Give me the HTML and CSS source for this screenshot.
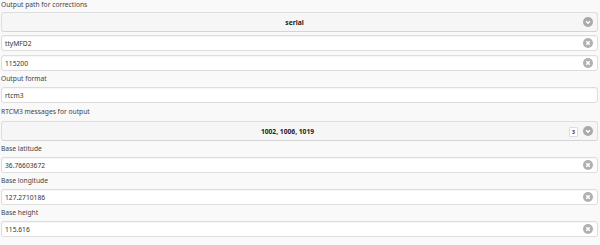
FILE: index.html
```html
<!DOCTYPE html>
<html>
<head>
<meta charset="utf-8">
<link rel="stylesheet" href="styles.css">
</head>
<body>
<form class="form">
  <div class="label first">Output path for corrections</div>
  <div class="select">
    <span class="select-text">serial</span>
    <span class="icon arrow"><svg viewBox="0 0 10 10" width="10" height="10"><circle cx="5" cy="5" r="5" fill="#a9a9a9"/><path d="M3 4.2 L5 6.2 L7 4.2" fill="none" stroke="#fff" stroke-width="1.5"/></svg></span>
  </div>
  <div class="input gap3"><span class="value">ttyMFD2</span><span class="icon clear"><svg viewBox="0 0 10 10" width="10" height="10"><circle cx="5" cy="5" r="5" fill="#b0b0b0"/><path d="M3.3 3.3 L6.7 6.7 M6.7 3.3 L3.3 6.7" stroke="#fff" stroke-width="1.5"/></svg></span></div>
  <div class="input gap4"><span class="value">115200</span><span class="icon clear"><svg viewBox="0 0 10 10" width="10" height="10"><circle cx="5" cy="5" r="5" fill="#b0b0b0"/><path d="M3.3 3.3 L6.7 6.7 M6.7 3.3 L3.3 6.7" stroke="#fff" stroke-width="1.5"/></svg></span></div>
  <div class="label">Output format</div>
  <div class="input"><span class="value">rtcm3</span></div>
  <div class="label tall">RTCM3 messages for output</div>
  <div class="select with-count">
    <span class="select-text">1002, 1006, 1019</span>
    <span class="count">3</span>
    <span class="icon arrow"><svg viewBox="0 0 10 10" width="10" height="10"><circle cx="5" cy="5" r="5" fill="#a9a9a9"/><path d="M3 4.2 L5 6.2 L7 4.2" fill="none" stroke="#fff" stroke-width="1.5"/></svg></span>
  </div>
  <div class="label">Base latitude</div>
  <div class="input"><span class="value">36.76603672</span><span class="icon clear"><svg viewBox="0 0 10 10" width="10" height="10"><circle cx="5" cy="5" r="5" fill="#b0b0b0"/><path d="M3.3 3.3 L6.7 6.7 M6.7 3.3 L3.3 6.7" stroke="#fff" stroke-width="1.5"/></svg></span></div>
  <div class="label">Base longitude</div>
  <div class="input"><span class="value">127.2710186</span><span class="icon clear"><svg viewBox="0 0 10 10" width="10" height="10"><circle cx="5" cy="5" r="5" fill="#b0b0b0"/><path d="M3.3 3.3 L6.7 6.7 M6.7 3.3 L3.3 6.7" stroke="#fff" stroke-width="1.5"/></svg></span></div>
  <div class="label">Base height</div>
  <div class="input"><span class="value">115.616</span><span class="icon clear"><svg viewBox="0 0 10 10" width="10" height="10"><circle cx="5" cy="5" r="5" fill="#b0b0b0"/><path d="M3.3 3.3 L6.7 6.7 M6.7 3.3 L3.3 6.7" stroke="#fff" stroke-width="1.5"/></svg></span></div>
</form>
</body>
</html>
```
FILE: styles.css
```css
html, body {
  margin: 0;
  padding: 0;
  background: #f9f9f9;
}
body {
  font-family: "Noto Sans", "Open Sans", sans-serif;
  font-size: 6.7px;
  color: #444;
}
.form {
  display: flex;
  flex-direction: column;
  width: 597px;
  padding-left: 1px;
}
.label {
  height: 10px;
  line-height: 10px;
  margin: 3px 0;
  color: #444;
}
.label.first {
  margin-top: 0;
  margin-bottom: 2px;
}
.label.tall {
  margin-top: 4px;
  margin-bottom: 4px;
}
.select {
  position: relative;
  height: 18px;
  border: 1px solid #dedede;
  border-bottom-color: #d4d4d4;
  border-radius: 3px;
  background: #f6f6f6;
  display: flex;
  align-items: center;
  justify-content: center;
  padding: 0 16px 0 6px;
}
.select.with-count {
  padding-right: 30px;
}
.select-text {
  font-weight: bold;
  color: #222;
}
.input {
  height: 14px;
  border: 1px solid #dddddd;
  border-radius: 3px;
  background: #fff;
  display: flex;
  align-items: center;
  justify-content: space-between;
  padding: 0 4px 0 3px;
  box-shadow: inset 0 1px 1px rgba(0,0,0,0.04);
}
.gap3 { margin-top: 3px; }
.gap4 { margin-top: 4px; }
.value {
  color: #333;
}
.icon {
  display: flex;
  width: 10px;
  height: 10px;
}
.arrow {
  position: absolute;
  right: 4px;
  top: 4px;
}
.count {
  position: absolute;
  right: 19px;
  top: 5px;
  width: 7px;
  height: 8px;
  background: #fff;
  border: 1px solid #ddd;
  border-radius: 1px;
  font-size: 5px;
  font-weight: bold;
  line-height: 8px;
  text-align: center;
  color: #333;
}
```
